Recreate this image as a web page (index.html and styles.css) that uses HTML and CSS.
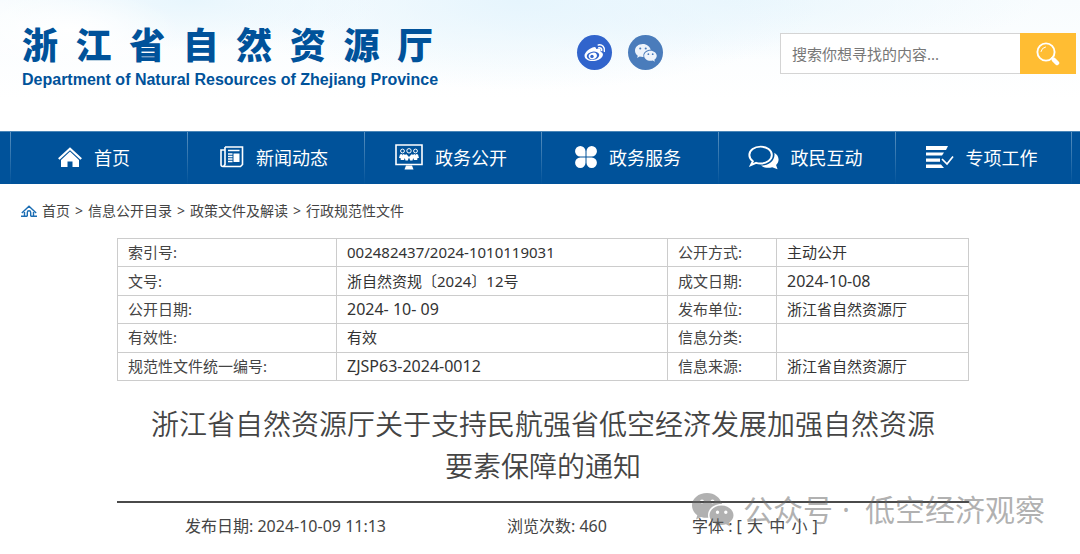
FILE: index.html
```html
<!DOCTYPE html>
<html lang="zh-CN">
<head>
<meta charset="utf-8">
<title>浙江省自然资源厅</title>
<meta name="viewport" content="width=device-width, initial-scale=1">
<link rel="stylesheet" href="styles.css">
</head>
<body>
<svg class="defs" aria-hidden="true">
  <symbol id="wechat" viewBox="0 0 42 34">
    <path fill-rule="evenodd" d="M15 0C6.500 0 0 5.500 0 12.500c0 4 2 7.300 5.300 9.700L4 26.500l5-2.600c1.900.6 3.900.9 6 .9h1.300A11 11 0 0 1 16 22c0-6.300 6-11 13.300-11h.7C28.500 4.800 22.300 0 15 0zM10 6.500a2 2 0 1 1 0 4 2 2 0 0 1 0-4zm10.500 0a2 2 0 1 1 0 4 2 2 0 0 1 0-4z"/>
    <path fill-rule="evenodd" d="M29.500 12.500c-6.800 0-12 4.500-12 9.800 0 5.400 5.200 9.700 12 9.700 1.600 0 3.100-.2 4.500-.7l4 2.200-1.100-3.600c2.700-1.900 4.600-4.500 4.600-7.600 0-5.300-5.300-9.800-12-9.800zM25.500 17.500a1.700 1.700 0 1 1 0 3.400 1.700 1.700 0 0 1 0-3.400zm8.300 0a1.700 1.700 0 1 1 0 3.400 1.700 1.700 0 0 1 0-3.400z"/>
  </symbol>
</svg>

<header class="header">
  <div class="logo">
    <h1 class="logo-cn">浙江省自然资源厅</h1>
    <p class="logo-en">Department of Natural Resources of Zhejiang Province</p>
  </div>
  <div class="social">
    <a class="social-link weibo" href="#" aria-label="微博">
      <svg width="22" height="20" viewBox="0 0 22 20">
        <path fill="#fff" d="M8.500 4.500c2-1 3.800-.6 3.600 1.600 2.400-1 5-.8 4.500 1.600-.1.600-.2.900.5 1.200 1.900.9 2.300 2.600 1.400 4.300-1.500 3-5.500 4.800-9.800 4.800C4 18 .5 15.800.5 12.700.5 9.800 4.500 6 8.500 4.500z"/>
        <ellipse cx="9" cy="12.700" rx="6.300" ry="4.100" fill="#3164cc" transform="rotate(-8 9 12.700)"/>
        <ellipse cx="8.800" cy="12.900" rx="4.200" ry="3.200" fill="#fff" transform="rotate(-20 8.800 12.900)"/>
        <circle cx="8" cy="13.400" r="1.700" fill="#3164cc"/>
        <path fill="none" stroke="#fff" stroke-width="1.500" stroke-linecap="round" d="M14.300 2c3.800-.9 7 2.200 6 6.200M14.800 4.800c2-.4 3.300 1 2.900 2.800"/>
      </svg>
    </a>
    <a class="social-link weixin" href="#" aria-label="微信">
      <svg width="22" height="18" fill="#eef4fb"><use href="#wechat"/></svg>
    </a>
  </div>
  <form class="search">
    <input class="search-input" type="text" placeholder="搜索你想寻找的内容..." aria-label="搜索">
    <button class="search-button" type="button" aria-label="搜索">
      <svg width="24" height="24" viewBox="0 0 24 24" fill="none" stroke="#fff" stroke-linecap="round">
        <circle cx="10" cy="10" r="8.600" stroke-width="1.900"/>
        <path stroke-width="1" d="M5 9.500A5.500 5.500 0 0 1 9.500 5"/>
        <path stroke-width="2" d="m16 16 1.500 1.500"/>
        <path stroke-width="4.500" d="m18 18 3 3"/>
      </svg>
    </button>
  </form>
</header>

<nav class="nav">
  <a class="nav-item" href="#">
    <svg width="24" height="20" viewBox="0 0 24 20"><path fill="none" stroke="#fff" stroke-width="2.200" d="M.8 12 12 1.700 23.200 12"/><path fill="#fff" d="M12 4.500 3 13v7h6.500v-5.500h5V20H21v-7z"/></svg>
    首页</a>
  <a class="nav-item" href="#">
    <svg width="24" height="22" viewBox="0 0 24 22" fill="none" stroke="#fff"><path stroke-width="1.600" d="M5 1h17.500v17.500l-2 2H3a2 2 0 0 1-2-2V4h3.500M5 1v17.500l-1.500 2"/><path stroke-width="1.300" d="M8 4.500h11.500M8 8h4.500M8 10.500h4.500M8 13h4.500M8 15.500h4.500"/><path fill="#fff" stroke="none" d="M13.500 7.500h6V16h-6z"/></svg>
    新闻动态</a>
  <a class="nav-item" href="#">
    <svg width="28" height="26" viewBox="0 0 28 26"><path fill="none" stroke="#fff" stroke-width="1.600" d="M1 1h26v19.500H1z"/><g fill="none" stroke="#fff" stroke-width="1"><circle cx="7.500" cy="7" r="1.900"/><circle cx="14" cy="6.800" r="2.200"/><circle cx="20.500" cy="7" r="1.900"/></g><path fill="#fff" d="m4 14 1-3.500 2-.5.500 1.500L8 10l2 .8 1.500-.6L14 13l2.500-2.800 1.500.6 2-.8.500 1.500.5-1.500 2 .5 1 3.500h-1.500l-.3 2H19l-.8-2-.7 2.500h-2.300L14 13.500l-1.200 3h-2.300L9.800 14 9 16H5.800l-.3-2zM11 21.500h6l1.500 4h-9z"/></svg>
    政务公开</a>
  <a class="nav-item" href="#">
    <svg width="22" height="22" viewBox="0 0 22 22" fill="#fff"><path d="M5.300 0A5.200 5.200 0 0 1 10.500 5.200v5.300H5.300A5.200 5.200 0 0 1 5.300 0zM16.700 0a5.200 5.200 0 0 1 0 10.500h-5.200V5.200A5.200 5.200 0 0 1 16.700 0zM5.300 11.500h5.200v5.200a5.200 5.200 0 1 1-5.200-5.200zM11.500 11.500h5.200a5.200 5.200 0 1 1-5.200 5.200z"/></svg>
    政务服务</a>
  <a class="nav-item" href="#">
    <svg width="31" height="25" viewBox="0 0 32 25"><path fill="none" stroke="#fff" stroke-width="2" d="M13 1.300c6.500 0 11.600 3.800 11.600 8.700S19.500 18.700 13 18.700c-1.700 0-3.200-.2-4.600-.7L3 20.300l2-4C2.800 14.700 1.400 12.500 1.400 10c0-4.900 5.100-8.700 11.600-8.700z"/><path fill="#fff" d="M27.200 7.500c5.300 3 5.600 9.500 1.800 12.800l1.500 4.200-5.500-2c-4 1.300-8.500.8-11.500-1.700 7.500.3 15-4.800 13.700-13.300z"/></svg>
    政民互动</a>
  <a class="nav-item" href="#">
    <svg width="28" height="23" viewBox="0 0 28 23"><path fill="#fff" d="M0 0h22l-2 4H0zM0 6.500h18l-2 3H0zM0 12.500h14v3.200H0zM0 18.500h15l3 3.500H0z"/><path fill="none" stroke="#fff" stroke-width="1.700" d="m16 13 5 5 6-7.500"/></svg>
    专项工作</a>
</nav>

<nav class="crumbs" aria-label="当前位置">
  <svg width="16" height="12" viewBox="0 0 16 12" fill="none" stroke="#1b6db3" stroke-width="1.400"><path d="M.8 8 8 1.200 15.200 8M3.500 7v4M12.500 7v4M6.300 11V7.500a1.700 1.700 0 0 1 3.400 0V11M0 11.300h6.500M9.500 11.300H16"/></svg>
  <a href="#">首页</a><span>&gt;</span><a href="#">信息公开目录</a><span>&gt;</span><a href="#">政策文件及解读</a><span>&gt;</span><a href="#">行政规范性文件</a>
</nav>

<main class="article">
  <table class="info">
    <colgroup><col class="col-label"><col class="col-value"><col class="col-label2"><col class="col-value2"></colgroup>
    <tr><th scope="row">索引号:</th><td>002482437/2024-1010119031</td><th scope="row">公开方式:</th><td>主动公开</td></tr>
    <tr><th scope="row">文号:</th><td>浙自然资规〔2024〕12号</td><th scope="row">成文日期:</th><td class="num">2024-10-08</td></tr>
    <tr><th scope="row">公开日期:</th><td class="num">2024- 10- 09</td><th scope="row">发布单位:</th><td>浙江省自然资源厅</td></tr>
    <tr><th scope="row">有效性:</th><td>有效</td><th scope="row">信息分类:</th><td></td></tr>
    <tr><th scope="row">规范性文件统一编号:</th><td class="num">ZJSP63-2024-0012</td><th scope="row">信息来源:</th><td>浙江省自然资源厅</td></tr>
  </table>
  <h2 class="title">浙江省自然资源厅关于支持民航强省低空经济发展加强自然资源要素保障的通知</h2>
  <div class="meta">
    <span>发布日期: 2024-10-09 11:13</span>
    <span>浏览次数: 460</span>
    <span class="sizes">字体 : [ <button type="button">大</button> <button type="button">中</button> <button type="button">小</button> ]</span>
  </div>
</main>

<div class="watermark">
  <svg width="42" height="34" fill="currentColor"><use href="#wechat"/></svg>
  <span>公众号</span><span class="dot">·</span><span>低空经济观察</span>
</div>
</body>
</html>
```

FILE: styles.css
```css
* {
  box-sizing: border-box;
}

body {
  position: relative;
  margin: 0;
  background: #fff;
  color: #444;
  font-family: "Noto Sans", "Noto Sans CJK SC", sans-serif;
  font-size: 15px;
}

a {
  color: inherit;
  text-decoration: none;
}

button {
  border: 0;
  padding: 0;
  background: none;
  color: inherit;
  font: inherit;
  cursor: pointer;
}

.defs {
  position: absolute;
  width: 0;
  height: 0;
}

/* Header */

.header {
  display: flex;
  align-items: flex-start;
  min-height: 131px;
  padding: 21px 4px 0 22px;
  background:
    radial-gradient(ellipse 110px 40px at 70px 30px, #fff, transparent),
    radial-gradient(ellipse 190px 50px at 190px 0, #e8f6fd, transparent),
    radial-gradient(ellipse 300px 90px at 520px 0, #e6f5fd, transparent),
    radial-gradient(ellipse 300px 60px at 740px 0, #ebf7fd, transparent),
    linear-gradient(#f8fcfe, #fff 100px);
}

.logo {
  width: 411px;
  color: #00529a;
}

.logo-cn {
  margin: 0;
  font-family: "Noto Sans CJK SC", sans-serif;
  font-size: 36px;
  font-weight: 900;
  line-height: 44px;
  text-align-last: justify;
}

.logo-en {
  margin: 0;
  font-family: "Liberation Sans", sans-serif;
  font-size: 16px;
  font-weight: 700;
  line-height: 30px;
  white-space: nowrap;
}

.social {
  display: flex;
  gap: 16px;
  margin: 14px 0 0 144px;
}

.social-link {
  display: grid;
  place-items: center;
  width: 35px;
  height: 35px;
  border-radius: 50%;
}

.weibo {
  background: #3164cc;
}

.weixin {
  background: #4a7cbb;
}

.search {
  display: flex;
  height: 41px;
  margin: 12px 0 0 auto;
}

.search-input {
  width: 240px;
  padding: 0 11px;
  border: 1px solid #d4d4d4;
  border-right: 0;
  background: #fff;
  color: #444;
  font: inherit;
}

.search-input::placeholder {
  color: #777;
}

.search-button {
  display: grid;
  place-items: center;
  width: 56px;
  background: #ffbd33;
}

/* Main navigation */

.nav {
  display: grid;
  grid-template-columns: repeat(6, 1fr);
  padding: 0 8px 0 10px;
  border-top: 1px solid #4a86b8;
  background: #00529a;
  color: #fff;
}

.nav-item {
  display: flex;
  align-items: center;
  justify-content: center;
  gap: 12px;
  height: 52px;
  padding: 0 4px 2px 0;
  border-left: 1px solid;
  border-image: linear-gradient(#5b92c0, #00529a) 1;
  font-size: 18px;
}

.nav-item:first-child {
  padding-right: 10px;
}

.nav-item:last-child {
  border-right: 1px solid;
}

/* Breadcrumb */

.crumbs {
  display: flex;
  align-items: center;
  gap: 5px;
  padding: 16px 21px;
  font-size: 14px;
  line-height: 22px;
}

/* Article */

.article {
  width: 858px;
  max-width: 100%;
  margin: 0 auto;
  padding-left: 6px;
}

.info {
  width: 100%;
  height: 143px;
  border-collapse: collapse;
  table-layout: fixed;
  line-height: 20px;
}

.info th,
.info td {
  padding: 0 10px 1px;
  border: 1px solid #ccc;
  font-weight: 400;
  text-align: left;
}

.info td {
  color: #333;
}

.info .num {
  font-size: 16px;
}

.col-label {
  width: 219px;
}

.col-value {
  width: 331px;
}

.col-label2 {
  width: 109px;
}

.title {
  margin: 0;
  padding: 22px 32px 14px;
  border-bottom: 2px solid #4a4a4a;
  font-size: 28px;
  font-weight: 350;
  line-height: 42px;
  text-align: center;
}

.meta {
  display: grid;
  grid-template-columns: 322fr 185fr 277fr;
  padding: 11px 0 17px 68px;
  font-size: 16px;
  line-height: 24px;
}

.sizes button {
  margin: 0 1px;
}

/* Account mark laid over the article */

.watermark {
  position: absolute;
  right: 35px;
  bottom: 23px;
  display: flex;
  align-items: center;
  gap: 9px;
  color: rgba(100, 100, 100, 0.5);
  font-size: 30px;
  line-height: 44px;
  pointer-events: none;
}

.dot {
  margin: 0 6px 0 0;
}
```
